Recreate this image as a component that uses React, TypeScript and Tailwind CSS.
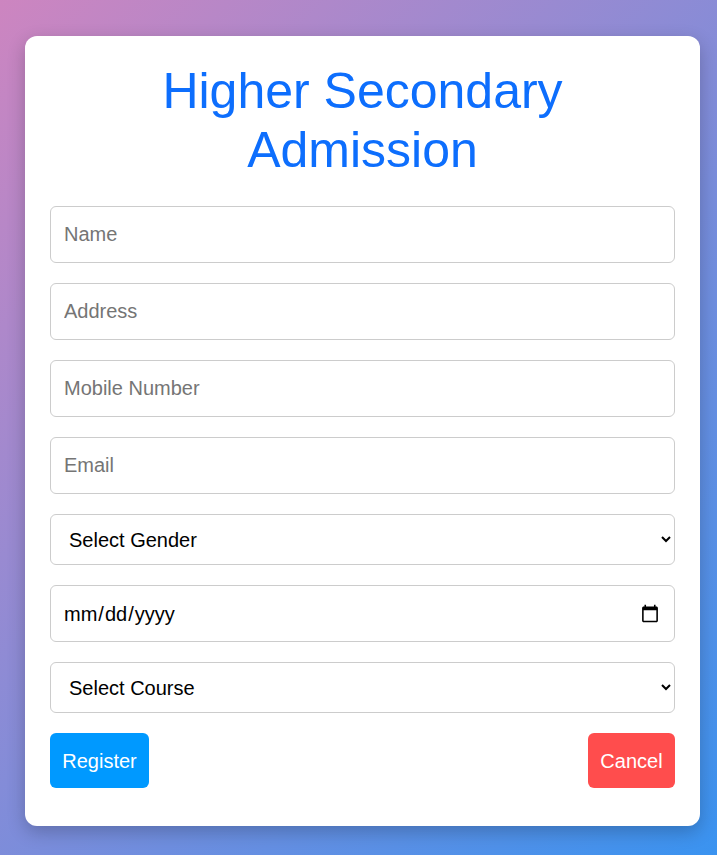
export default function App() {
  const inputClass =
    'w-full h-[57px] px-[13px] border border-[#cccccc] rounded-[6px] text-[20px] text-black placeholder:text-[#757575] bg-white outline-none';
  const selectClass =
    'w-full h-[51px] pl-[14px] pr-[8px] border border-[#cccccc] rounded-[6px] text-[20px] text-black bg-white outline-none';

  return (
    <div
      className="min-h-screen pl-[25px] pt-[36px] pb-[29px] bg-[linear-gradient(135deg,#cd85c0_0%,#3a93f0_100%)]"
      style={{ fontFamily: '"Liberation Sans", Arial, sans-serif' }}
    >
      <div className="w-[675px] bg-white rounded-[12px] shadow-[0_6px_18px_rgba(0,0,0,0.22)] px-[25px] pt-[26px] pb-[38px]">
        <h1 className="text-center text-[50px] leading-[59px] text-[#0d6efd] font-normal mb-[26px]">
          Higher Secondary Admission
        </h1>

        <form className="flex flex-col gap-[20px]" onSubmit={(e) => e.preventDefault()}>
          <input type="text" placeholder="Name" className={inputClass} />
          <input type="text" placeholder="Address" className={inputClass} />
          <input type="tel" placeholder="Mobile Number" className={inputClass} />
          <input type="email" placeholder="Email" className={inputClass} />
          <select className={selectClass} defaultValue="">
            <option value="">Select Gender</option>
            <option value="male">Male</option>
            <option value="female">Female</option>
            <option value="other">Other</option>
          </select>
          <input
            type="date"
            className="w-full h-[57px] px-[12px] border border-[#cccccc] rounded-[6px] text-[20px] text-black bg-white outline-none"
          />
          <select className={selectClass} defaultValue="">
            <option value="">Select Course</option>
            <option value="science">Science</option>
            <option value="commerce">Commerce</option>
            <option value="humanities">Humanities</option>
          </select>

          <div className="flex items-center justify-between">
            <button
              type="submit"
              className="h-[55px] px-[12px] w-[99px] rounded-[6px] bg-[#0099ff] text-white text-[20px]"
            >
              Register
            </button>
            <button
              type="button"
              className="h-[55px] px-[12px] w-[87px] rounded-[6px] bg-[#ff4d4d] text-white text-[20px]"
            >
              Cancel
            </button>
          </div>
        </form>
      </div>
    </div>
  );
}
